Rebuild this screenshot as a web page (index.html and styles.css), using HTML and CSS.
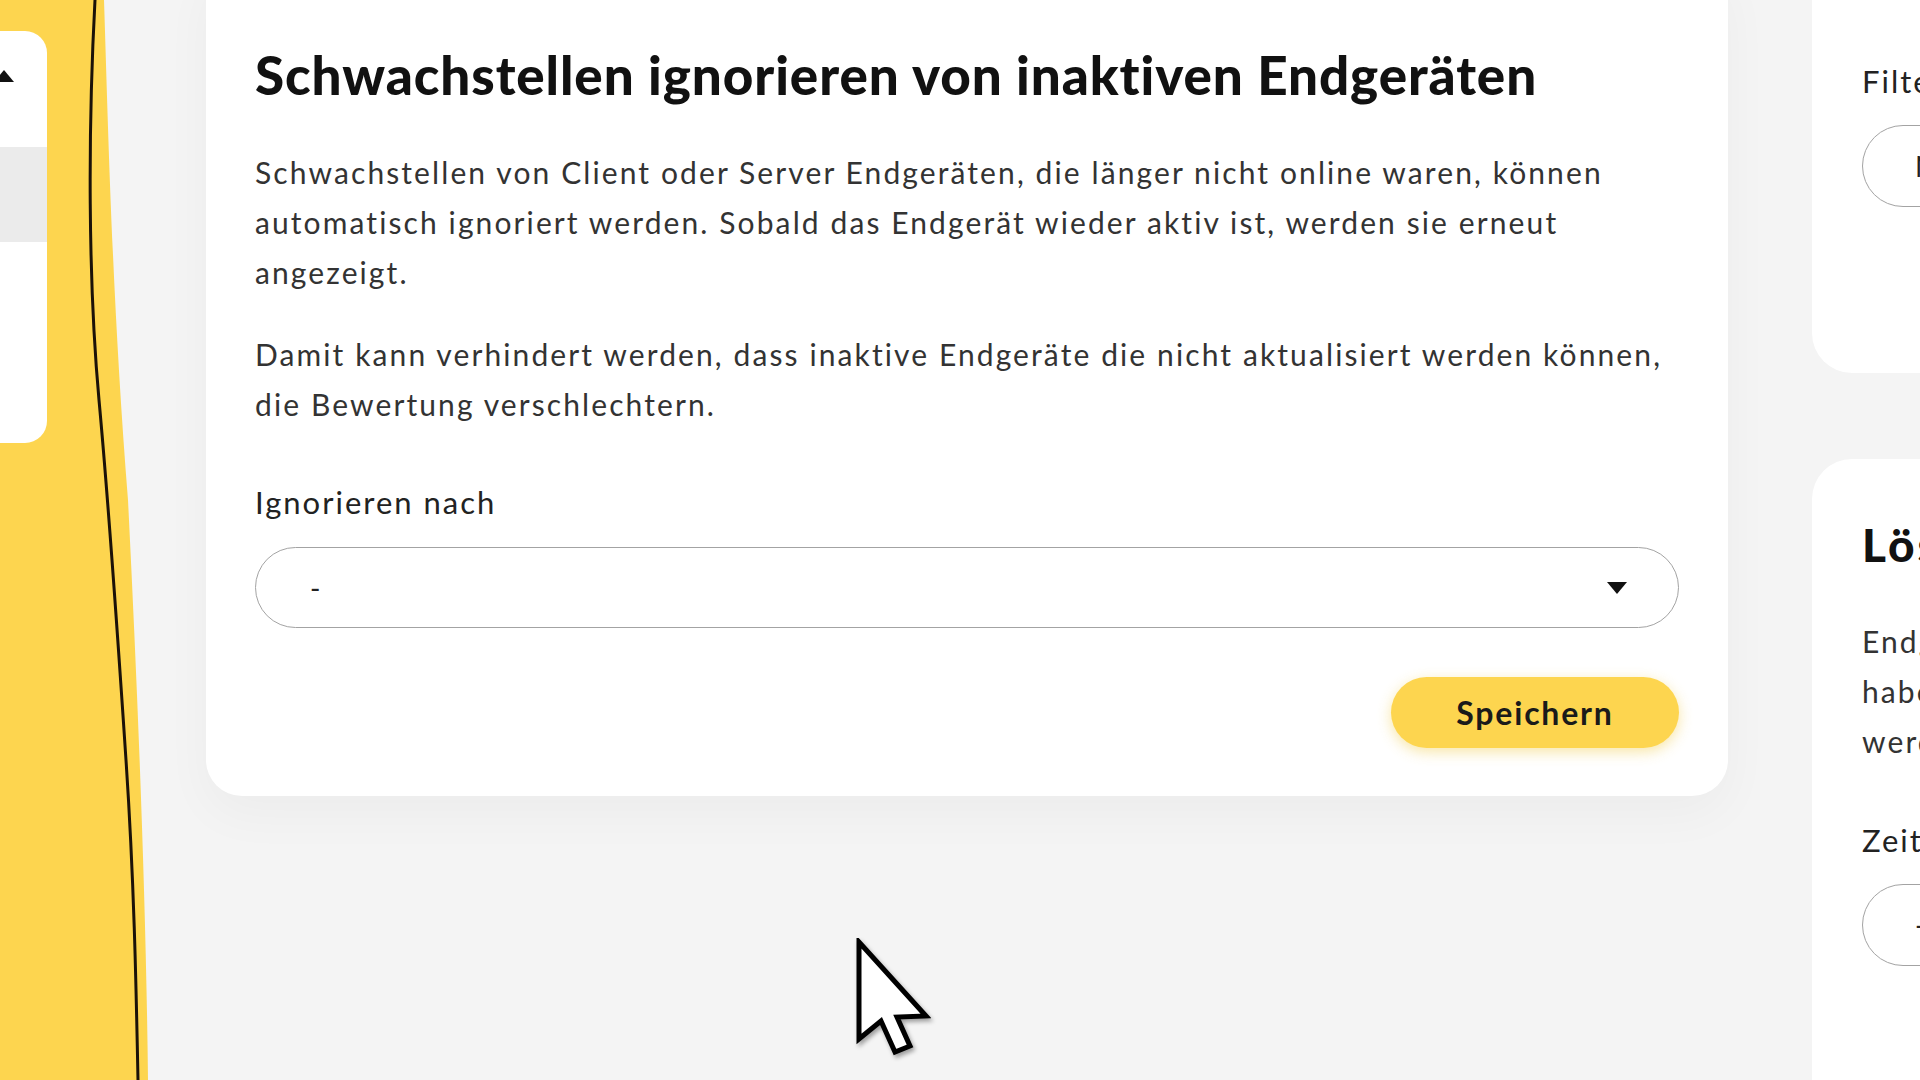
FILE: index.html
```html
<!DOCTYPE html>
<html lang="de">
<head>
<meta charset="utf-8">
<title>Schwachstellen ignorieren</title>
<link rel="stylesheet" href="styles.css">
</head>
<body>
<div class="app">
  <aside class="sidebar">
    <svg class="sidebar-art" width="206" height="1080" viewBox="0 0 206 1080">
      <path d="M0 0 H104 C108 120 112 300 128 500 C138 700 146 900 148 1080 H0 Z" fill="#fdd54f"/>
      <path d="M95 0 C88 130 88 280 99 400 S118 640 126 760 S136 980 138 1080" fill="none" stroke="#1b1208" stroke-width="3"/>
      <rect x="-30" y="31" width="77" height="412" rx="22" fill="#ffffff"/>
      <rect x="0" y="147" width="47" height="95" fill="#ebebeb"/>
      <polygon points="-6,82 4,70 14,82" fill="#111111"/>
    </svg>
  </aside>

  <main class="main">
    <section class="card">
      <h1 class="card-title">Schwachstellen ignorieren von inaktiven Endgeräten</h1>
      <p class="card-text first">Schwachstellen von Client oder Server Endgeräten, die länger nicht online waren, können automatisch ignoriert werden. Sobald das Endgerät wieder aktiv ist, werden sie erneut angezeigt.</p>
      <p class="card-text second">Damit kann verhindert werden, dass inaktive Endgeräte die nicht aktualisiert werden können, die Bewertung verschlechtern.</p>
      <label class="field-label">Ignorieren nach</label>
      <div class="select">
        <span class="select-value">-</span>
        <svg class="select-caret" width="20" height="12" viewBox="0 0 20 12"><polygon points="0,0 20,0 10,12" fill="#111"/></svg>
      </div>
      <div class="actions">
        <button class="btn-primary">Speichern</button>
      </div>
    </section>
  </main>

  <aside class="side-col">
    <section class="side-card top">
      <label class="field-label">Filter für Endgeräte</label>
      <div class="input"><span class="input-value">Nie</span></div>
    </section>
    <section class="side-card bottom">
      <h2 class="side-title">Löschen von inaktiven Endgeräten</h2>
      <p class="card-text">Endgeräte, die sich länger nicht gemeldet<br>haben, können automatisch gelöscht<br>werden.</p>
      <label class="field-label zeit">Zeitraum</label>
      <div class="input"><span class="input-value">-</span></div>
    </section>
  </aside>
</div>

<svg class="cursor" width="76" height="120" viewBox="-4 -4 76 120">
  <polygon points="0,0 0,97 22,79 36,110 51,104 38,75 67,74" fill="#ffffff" stroke="#000000" stroke-width="5" stroke-linejoin="miter"/>
</svg>
</body>
</html>
```

FILE: styles.css
```css
* { box-sizing: border-box; }

html, body {
  margin: 0;
  padding: 0;
  width: 1920px;
  height: 1080px;
  overflow: hidden;
  background: #f4f4f4;
  font-family: "Lato", "Noto Sans", sans-serif;
  color: #2b2b2b;
}

.app {
  display: flex;
  align-items: flex-start;
  height: 1080px;
  overflow: hidden;
}

.sidebar {
  flex: 0 0 206px;
  height: 1080px;
}

.sidebar-art { display: block; }

.main {
  flex: 0 0 1522px;
}

.card {
  margin-top: -40px;
  background: #ffffff;
  border-radius: 36px;
  padding: 83px 49px 48px 49px;
  box-shadow: 0 18px 50px rgba(0, 0, 0, 0.035);
  display: flex;
  flex-direction: column;
}

.card-title {
  margin: 0;
  font-size: 53px;
  line-height: 64px;
  font-weight: 900;
  letter-spacing: 0.9px;
  color: #111111;
}

.card-text {
  margin: 0;
  font-size: 30px;
  line-height: 50px;
  font-weight: 400;
  letter-spacing: 2.1px;
  color: #333333;
}

.card-text.first { margin-top: 40px; }
.card-text.second { margin-top: 32px; }

.field-label {
  display: block;
  margin-top: 53px;
  font-size: 31px;
  line-height: 40px;
  letter-spacing: 2px;
  color: #222222;
}

.select {
  margin-top: 25px;
  height: 81px;
  border: 1.5px solid #a3a3a3;
  border-radius: 999px;
  display: flex;
  align-items: center;
  justify-content: space-between;
  padding: 0 51px 0 54px;
}

.select-value {
  font-size: 28px;
  color: #222222;
}

.select-caret { display: block; }

.actions {
  margin-top: 49px;
  display: flex;
  justify-content: flex-end;
}

.btn-primary {
  width: 288px;
  height: 71px;
  border: none;
  border-radius: 999px;
  background: #fdd54f;
  box-shadow: 0 4px 14px rgba(240, 200, 60, 0.45);
  font-family: "Lato", "Noto Sans", sans-serif;
  font-size: 32px;
  font-weight: 700;
  letter-spacing: 1.8px;
  color: #1a1a1a;
  padding: 0;
}

.side-col {
  flex: 0 0 420px;
  margin-left: 84px;
  display: flex;
  flex-direction: column;
}

.side-card {
  background: #ffffff;
  border-radius: 40px;
  padding-left: 50px;
  white-space: nowrap;
  overflow: hidden;
}

.side-card.top {
  margin-top: -40px;
  height: 413px;
  padding-top: 61px;
}

.side-card.top .field-label { margin-top: 40px; }

.input {
  margin-top: 24px;
  height: 82px;
  width: 500px;
  border: 1.5px solid #a3a3a3;
  border-radius: 999px;
  display: flex;
  align-items: center;
  padding-left: 52px;
}

.input-value {
  font-size: 28px;
  color: #222222;
}

.side-card.bottom {
  margin-top: 86px;
  height: 700px;
  padding-top: 59px;
}

.side-title {
  margin: 0;
  font-size: 46px;
  line-height: 54px;
  font-weight: 900;
  letter-spacing: 3px;
  color: #111111;
}

.side-card.bottom .card-text {
  margin-top: 44px;
}

.field-label.zeit { margin-top: 54px; }

.cursor {
  position: absolute;
  left: 855px;
  top: 938px;
  filter: drop-shadow(2px 3px 2px rgba(0, 0, 0, 0.35));
}
```
